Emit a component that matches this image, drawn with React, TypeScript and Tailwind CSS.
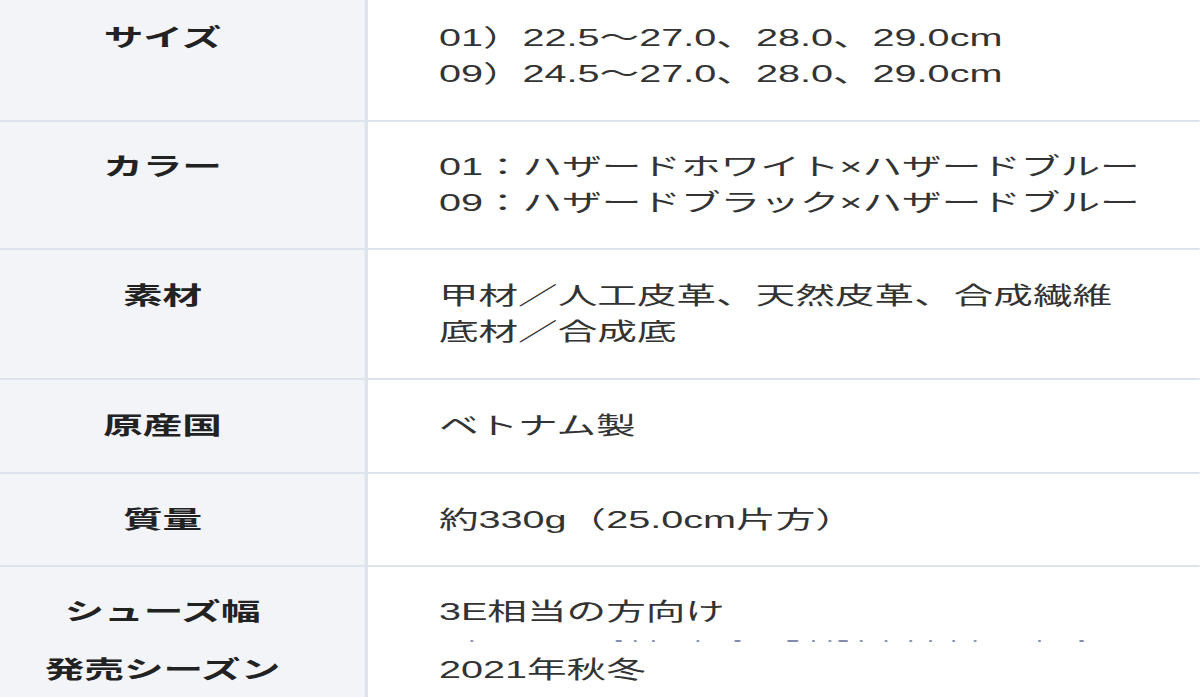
import React from 'react';

// spec rows: label + value lines
const rows: { label: string; lines: string[]; pad: string }[] = [
  {
    label: 'サイズ',
    lines: ['01）22.5〜27.0、28.0、29.0cm', '09）24.5〜27.0、28.0、29.0cm'],
    pad: 'pt-[20px] pb-[28px]',
  },
  {
    label: 'カラー',
    lines: ['01：ハザードホワイト×ハザードブルー', '09：ハザードブラック×ハザードブルー'],
    pad: 'pt-[27px] pb-[27px]',
  },
  {
    label: '素材',
    lines: ['甲材／人工皮革、天然皮革、合成繊維', '底材／合成底'],
    pad: 'pt-[28px] pb-[28px]',
  },
  { label: '原産国', lines: ['ベトナム製'], pad: 'pt-[28px] pb-[28px]' },
  { label: '質量', lines: ['約330g（25.0cm片方）'], pad: 'pt-[28px] pb-[27px]' },
];

// tips of a clipped line under シューズ幅 (x, width in screenshot px)
const marks: [number, number][] = [
  [471, 3], [615, 7], [634, 3], [652, 3], [697, 3], [734, 7], [788, 11], [812, 3],
  [829, 3], [838, 11], [860, 3], [884, 4], [909, 3], [929, 3], [952, 3], [974, 3],
  [1039, 3], [1079, 6],
];
const S = 1.65;

const App: React.FC = () => {
  let prev = 439;
  return (
    <div className="h-[697px] w-[1200px] overflow-hidden bg-white">
      <div className="w-[727px] origin-top-left scale-x-[1.65] font-['Liberation_Sans','Noto_Sans_CJK_JP',sans-serif] text-[24px] leading-[36px] text-[#333]">
        {rows.map((row) => (
          <div key={row.label} className="grid grid-cols-[223px_1fr] border-b-2 border-[#dde3ec]">
            <div
              className={`bg-[#f2f4f8] border-r-2 border-[#dde3ec] text-center font-bold text-[#222] pr-[24px] ${row.pad}`}
            >
              {row.label}
            </div>
            <div className={`pl-[43px] ${row.pad}`}>
              {row.lines.map((line) => (
                <div key={line}>{line}</div>
              ))}
            </div>
          </div>
        ))}

        {/* last block: two rows squashed together */}
        <div className="grid grid-cols-[223px_1fr]">
          <div className="bg-[#f2f4f8] border-r-2 border-[#dde3ec] text-center font-bold text-[#222] pr-[24px] pt-[27px] pb-[40px]">
            <div>シューズ幅</div>
            <div className="h-[22px]" />
            <div>発売シーズン</div>
          </div>
          <div className="pl-[43px] pt-[27px] pb-[40px]">
            <div>3E相当の方向け</div>
            <div className="h-[22px] pt-[10px]">
              <div className="flex h-[2px]" aria-hidden="true">
                {marks.map(([x, w]) => {
                  const ml = (x - prev) / S;
                  prev = x + w;
                  return (
                    <span
                      key={x}
                      className="h-[2px] shrink-0 rounded-full bg-[#4a5a8a] opacity-70"
                      style={{ marginLeft: ml, width: w / S }}
                    />
                  );
                })}
              </div>
            </div>
            <div>2021年秋冬</div>
          </div>
        </div>
      </div>
    </div>
  );
};

export default App;
